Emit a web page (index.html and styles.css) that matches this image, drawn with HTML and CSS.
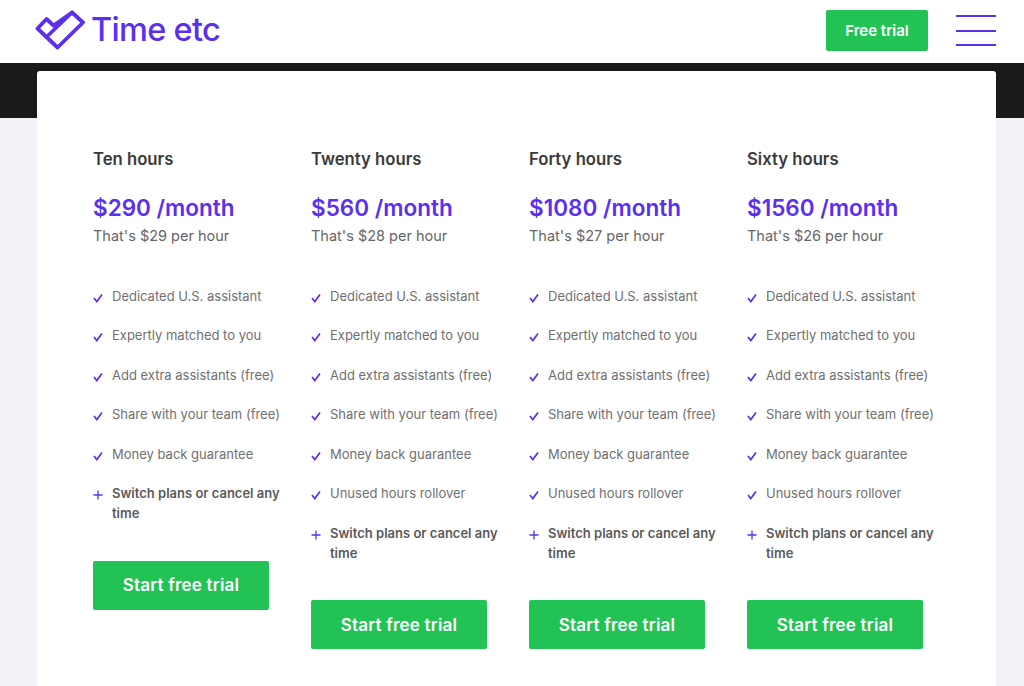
FILE: index.html
```html
<!DOCTYPE html>
<html lang="en">
<head>
<meta charset="utf-8">
<title>Time etc pricing</title>
<link rel="stylesheet" href="styles.css">
</head>
<body>
<header class="header">
  <a class="logo">
    <svg class="logo-mark" viewBox="0 0 50 40" width="50" height="40" fill="none" stroke="#5a30ee" stroke-width="3.800" stroke-linejoin="round" stroke-linecap="round">
      <path d="M2.500 18.500 L11.500 9 L18.500 15.500 L37 2.500 L48 12.500 L22.500 37.500 Z"/>
      <path d="M37 2.500 L11.500 27"/>
    </svg>
    <span class="logo-text">Time etc</span>
  </a>
  <div class="header-right">
    <a class="btn btn-small">Free trial</a>
    <div class="burger"><span></span><span></span><span></span></div>
  </div>
</header>
<div class="band"></div>
<main class="card">
  <section class="plan">
    <h2>Ten hours</h2>
    <p class="price">$290 /month</p>
    <p class="rate">That's $29 per hour</p>
    <ul>
      <li><svg class="ic" viewBox="0 0 10 10"><path d="M1 5 L3.800 8.500 L9 1.500"/></svg><span>Dedicated U.S. assistant</span></li>
      <li><svg class="ic" viewBox="0 0 10 10"><path d="M1 5 L3.800 8.500 L9 1.500"/></svg><span>Expertly matched to you</span></li>
      <li><svg class="ic" viewBox="0 0 10 10"><path d="M1 5 L3.800 8.500 L9 1.500"/></svg><span>Add extra assistants (free)</span></li>
      <li><svg class="ic" viewBox="0 0 10 10"><path d="M1 5 L3.800 8.500 L9 1.500"/></svg><span>Share with your team (free)</span></li>
      <li><svg class="ic" viewBox="0 0 10 10"><path d="M1 5 L3.800 8.500 L9 1.500"/></svg><span>Money back guarantee</span></li>
      <li class="strong"><svg class="ic" viewBox="0 0 10 10"><path d="M5 .5 V9.500 M.5 5 H9.500"/></svg><span>Switch plans or cancel any time</span></li>
    </ul>
    <a class="btn btn-large">Start free trial</a>
  </section>
  <section class="plan">
    <h2>Twenty hours</h2>
    <p class="price">$560 /month</p>
    <p class="rate">That's $28 per hour</p>
    <ul>
      <li><svg class="ic" viewBox="0 0 10 10"><path d="M1 5 L3.800 8.500 L9 1.500"/></svg><span>Dedicated U.S. assistant</span></li>
      <li><svg class="ic" viewBox="0 0 10 10"><path d="M1 5 L3.800 8.500 L9 1.500"/></svg><span>Expertly matched to you</span></li>
      <li><svg class="ic" viewBox="0 0 10 10"><path d="M1 5 L3.800 8.500 L9 1.500"/></svg><span>Add extra assistants (free)</span></li>
      <li><svg class="ic" viewBox="0 0 10 10"><path d="M1 5 L3.800 8.500 L9 1.500"/></svg><span>Share with your team (free)</span></li>
      <li><svg class="ic" viewBox="0 0 10 10"><path d="M1 5 L3.800 8.500 L9 1.500"/></svg><span>Money back guarantee</span></li>
      <li><svg class="ic" viewBox="0 0 10 10"><path d="M1 5 L3.800 8.500 L9 1.500"/></svg><span>Unused hours rollover</span></li>
      <li class="strong"><svg class="ic" viewBox="0 0 10 10"><path d="M5 .5 V9.500 M.5 5 H9.500"/></svg><span>Switch plans or cancel any time</span></li>
    </ul>
    <a class="btn btn-large">Start free trial</a>
  </section>
  <section class="plan">
    <h2>Forty hours</h2>
    <p class="price">$1080 /month</p>
    <p class="rate">That's $27 per hour</p>
    <ul>
      <li><svg class="ic" viewBox="0 0 10 10"><path d="M1 5 L3.800 8.500 L9 1.500"/></svg><span>Dedicated U.S. assistant</span></li>
      <li><svg class="ic" viewBox="0 0 10 10"><path d="M1 5 L3.800 8.500 L9 1.500"/></svg><span>Expertly matched to you</span></li>
      <li><svg class="ic" viewBox="0 0 10 10"><path d="M1 5 L3.800 8.500 L9 1.500"/></svg><span>Add extra assistants (free)</span></li>
      <li><svg class="ic" viewBox="0 0 10 10"><path d="M1 5 L3.800 8.500 L9 1.500"/></svg><span>Share with your team (free)</span></li>
      <li><svg class="ic" viewBox="0 0 10 10"><path d="M1 5 L3.800 8.500 L9 1.500"/></svg><span>Money back guarantee</span></li>
      <li><svg class="ic" viewBox="0 0 10 10"><path d="M1 5 L3.800 8.500 L9 1.500"/></svg><span>Unused hours rollover</span></li>
      <li class="strong"><svg class="ic" viewBox="0 0 10 10"><path d="M5 .5 V9.500 M.5 5 H9.500"/></svg><span>Switch plans or cancel any time</span></li>
    </ul>
    <a class="btn btn-large">Start free trial</a>
  </section>
  <section class="plan">
    <h2>Sixty hours</h2>
    <p class="price">$1560 /month</p>
    <p class="rate">That's $26 per hour</p>
    <ul>
      <li><svg class="ic" viewBox="0 0 10 10"><path d="M1 5 L3.800 8.500 L9 1.500"/></svg><span>Dedicated U.S. assistant</span></li>
      <li><svg class="ic" viewBox="0 0 10 10"><path d="M1 5 L3.800 8.500 L9 1.500"/></svg><span>Expertly matched to you</span></li>
      <li><svg class="ic" viewBox="0 0 10 10"><path d="M1 5 L3.800 8.500 L9 1.500"/></svg><span>Add extra assistants (free)</span></li>
      <li><svg class="ic" viewBox="0 0 10 10"><path d="M1 5 L3.800 8.500 L9 1.500"/></svg><span>Share with your team (free)</span></li>
      <li><svg class="ic" viewBox="0 0 10 10"><path d="M1 5 L3.800 8.500 L9 1.500"/></svg><span>Money back guarantee</span></li>
      <li><svg class="ic" viewBox="0 0 10 10"><path d="M1 5 L3.800 8.500 L9 1.500"/></svg><span>Unused hours rollover</span></li>
      <li class="strong"><svg class="ic" viewBox="0 0 10 10"><path d="M5 .5 V9.500 M.5 5 H9.500"/></svg><span>Switch plans or cancel any time</span></li>
    </ul>
    <a class="btn btn-large">Start free trial</a>
  </section>
</main>
```

FILE: styles.css
```css
* { box-sizing: border-box; }
html, body { margin: 0; padding: 0; height: 100%; overflow: hidden; }
body { background: #f3f2f9; font-family: Inter, "Noto Sans", sans-serif; color: #333; }
.header { height: 63px; background: #fff; padding: 0 28px 0 35px; display: flex; align-items: center; justify-content: space-between; }
.logo { display: flex; align-items: center; gap: 6px; }
.logo-mark { display: block; margin-top: -3px; }
.logo-text { font-size: 32.500px; font-weight: 500; color: #5a30ee; letter-spacing: -.7px; line-height: 40px; margin-top: -3px; }
.header-right { display: flex; align-items: center; gap: 28px; margin-top: -2px; }
.btn { display: flex; align-items: center; justify-content: center; background: #22c354; color: #fff; border-radius: 2px; font-weight: 600; }
.btn-small { width: 102px; height: 41px; font-size: 15px; }
.btn-large { width: 176px; height: 49px; font-size: 17px; letter-spacing: .2px; margin-top: 37.500px; }
.burger { width: 40px; height: 31px; display: flex; flex-direction: column; justify-content: space-between; }
.burger span { display: block; height: 2px; background: #5a30ee; }
.band { height: 55px; background: #1a1a1a; }
.card { position: absolute; top: 71px; left: 37px; width: 959px; height: 640px; background: #fff; border-radius: 3px; padding: 78px 0 0 56px; display: flex; align-items: flex-start; }
.plan { width: 218px; flex: none; }
h2 { margin: 0; font-size: 16.700px; line-height: 20px; font-weight: 600; color: #3a3a3a; }
.price { margin: 24px 0 0; font-size: 22.500px; line-height: 30px; font-weight: 600; color: #5a30ee; }
.rate { margin: 3px 0 0; font-size: 14.500px; line-height: 20px; color: #666; }
ul { list-style: none; margin: 39.500px 0 0; padding: 0; display: flex; flex-direction: column; gap: 19.500px; }
li { display: flex; align-items: flex-start; font-size: 13px; line-height: 20px; color: #707070; padding-right: 16px; }
li span { flex: 1; }
li.strong { font-weight: 600; color: #5a5a5a; }
.ic { width: 10px; height: 10px; flex: none; margin: 7px 9px 0 0; fill: none; stroke: #5a30ee; stroke-width: 1.700; }
li.strong .ic { stroke-width: 1.300; }
```
